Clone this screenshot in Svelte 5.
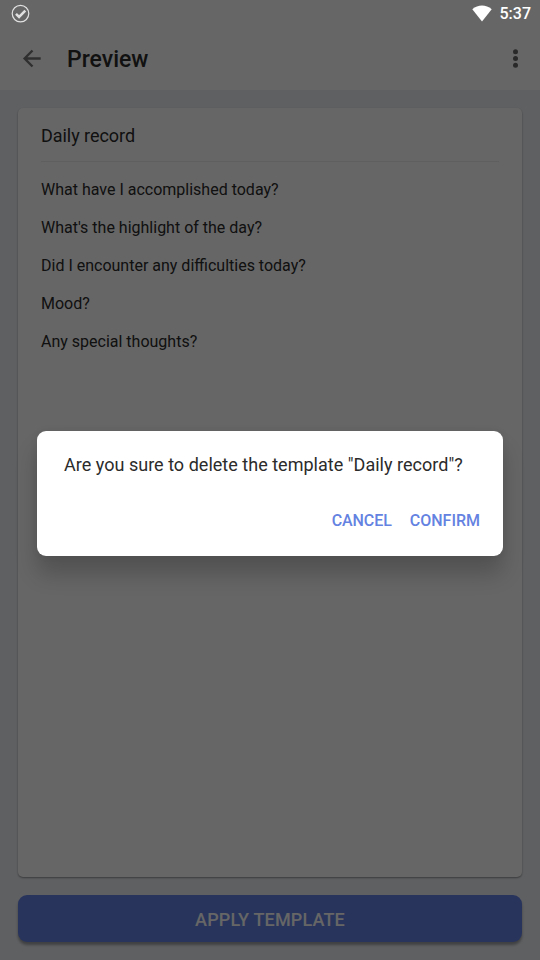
<script>
  const title = 'Daily record';
  const questions = [
    'What have I accomplished today?',
    "What's the highlight of the day?",
    'Did I encounter any difficulties today?',
    'Mood?',
    'Any special thoughts?'
  ];
</script>

<div class="screen">
  <header>
    <svg class="back" width="20" height="20" viewBox="0 0 20 20" fill="none" stroke="#777" stroke-width="2.4">
      <path d="M19.7 9.5H3.8M11.5 1.5L3.6 9.5l7.9 8" />
    </svg>
    <h1>Preview</h1>
    <svg class="more" width="6" height="20" viewBox="0 0 6 20" fill="#686868">
      <circle cx="2.5" cy="2.7" r="2.5" /><circle cx="2.5" cy="9.5" r="2.5" /><circle cx="2.5" cy="16.3" r="2.5" />
    </svg>
  </header>
  <main>
    <section class="card">
      <h2><span>{title}</span></h2>
      {#each questions as question}
        <p><span>{question}</span></p>
      {/each}
    </section>
    <button class="apply">APPLY TEMPLATE</button>
  </main>

  <div class="scrim">
    <div class="status">
      <svg width="20" height="20" viewBox="0 0 20 20" fill="none">
        <circle cx="10.5" cy="9.6" r="8.3" stroke="#e0e0e0" stroke-width="1.2" />
        <path d="M6 9.8l3.1 3.1 6.2-6.3" stroke="#e0e0e0" stroke-width="2.5" />
      </svg>
      <div class="right">
        <svg width="20" height="17" viewBox="0 0 20 17" fill="#fff"><path d="M0.3 4.2C6-.8 14-.8 19.7 4.2L10 16.4z" /></svg>
        <time>5:37</time>
      </div>
    </div>
    <div class="dialog" role="dialog">
      <div class="message"><span>Are you sure to delete the template "{title}"?</span></div>
      <div class="actions">
        <button class="cancel">CANCEL</button>
        <button class="confirm">CONFIRM</button>
      </div>
    </div>
  </div>
</div>

<style>
  .screen {
    position: relative;
    width: 540px;
    height: 960px;
    overflow: hidden;
    display: flex;
    flex-direction: column;
    background: #edf1f5;
    font-family: Roboto, sans-serif;
    color: #2b2b2b;
  }
  .screen * { box-sizing: border-box; }
  header {
    height: 90px;
    flex: none;
    display: flex;
    align-items: center;
    padding: 28px 21px 0 21px;
    background: #fff;
  }
  h1 { margin: 2px 0 0 26px; font-size: 23px; line-height: 30px; font-weight: 500; }
  .more { margin-left: auto; }
  main {
    flex: 1;
    display: flex;
    flex-direction: column;
    gap: 18px;
    padding: 18px 18px 18px;
  }
  .card {
    height: 769px;
    padding: 0 23px;
    border-radius: 5px;
    background: #fff;
    box-shadow: 0 1px 2px rgba(0, 0, 0, .4);
  }
  h2 {
    height: 54px;
    margin: 0 0 9px;
    padding-top: 15px;
    border-bottom: 1px solid #eee;
    font-size: 18px;
    line-height: 26px;
    font-weight: 400;
    letter-spacing: -.05px;
  }
  p { height: 38px; margin: 0; font-size: 16px; line-height: 38px; white-space: nowrap; }
  button { margin: 0; padding: 0; border: 0; font-family: inherit; }
  .apply {
    height: 47px;
    border-radius: 9px;
    background: #6482e6;
    color: #fff;
    font-size: 18px;
    font-weight: 500;
    letter-spacing: .15px;
    padding-top: 2px;
    box-shadow: 0 3px 3px rgba(0, 0, 0, .34);
  }
  .scrim {
    position: absolute;
    inset: 0;
    display: flex;
    flex-direction: column;
    align-items: center;
    background: rgba(0, 0, 0, .6);
  }
  .status {
    width: 100%;
    height: 27px;
    padding: 0 9px 0 10px;
    display: flex;
    align-items: center;
    justify-content: space-between;
    color: #fff;
  }
  .right { display: flex; align-items: center; gap: 8px; }
  time { font-size: 16px; line-height: 20px; font-weight: 500; }
  .dialog {
    width: 466px;
    height: 125px;
    margin-top: 404px;
    padding: 20px 23px 0 27px;
    border-radius: 9px;
    background: #fff;
    box-shadow: 0 18px 22px rgba(0, 0, 0, .2), 0 0 8px rgba(0, 0, 0, .06);
  }
  .message { height: 56px; font-size: 18px; line-height: 28px; letter-spacing: .02px; white-space: nowrap; }
  .actions { display: flex; justify-content: flex-end; gap: 18px; }
  .actions button {
    background: none;
    color: #6482e1;
    font-size: 16px;
    line-height: 28px;
    font-weight: 500;
  }
  .cancel { letter-spacing: -.08px; }
</style>
